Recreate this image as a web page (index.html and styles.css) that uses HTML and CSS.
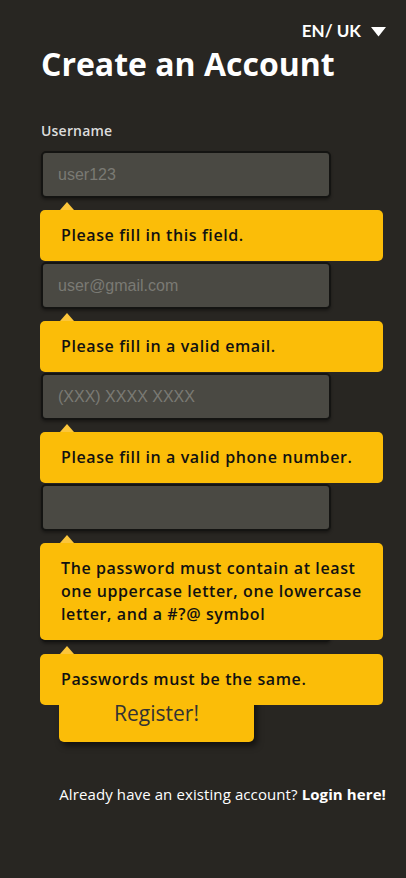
FILE: index.html
```html
<!DOCTYPE html>
<html lang="en">
<head>
<meta charset="utf-8">
<title>Create an Account</title>
<link rel="stylesheet" href="styles.css">
</head>
<body>
<div class="page">
  <header class="top">
    <button class="lang" type="button">EN/ UK
      <svg class="caret" width="15" height="10" viewBox="0 0 15 10"><path d="M0 0 H15 L7.5 9.5 Z" fill="#fff"/></svg>
    </button>
  </header>
  <h1 class="title">Create an Account</h1>
  <form class="form">
    <div class="field">
      <label class="label" for="username">Username</label>
      <input class="input" id="username" type="text" placeholder="user123">
      <div class="tip">Please fill in this field.</div>
    </div>
    <div class="field">
      <input class="input" type="text" aria-label="Email" placeholder="user@gmail.com">
      <div class="tip">Please fill in a valid email.</div>
    </div>
    <div class="field">
      <input class="input" type="text" aria-label="Phone number" placeholder="(XXX) XXXX XXXX">
      <div class="tip">Please fill in a valid phone number.</div>
    </div>
    <div class="field">
      <input class="input" type="password" aria-label="Password">
      <div class="tip">The password must contain at least one uppercase letter, one lowercase letter, and a #?@ symbol</div>
    </div>
    <div class="field">
      <input class="input" type="password" aria-label="Confirm password">
      <div class="tip">Passwords must be the same.</div>
    </div>
    <button class="register" type="button">Register!</button>
  </form>
  <p class="login">Already have an existing account? <b>Login here!</b></p>
</div>
</body>
</html>
```

FILE: styles.css
```css
* { box-sizing: border-box; }
html, body { margin: 0; padding: 0; }
body {
  background: #282622;
  font-family: "Open Sans", "Noto Sans", sans-serif;
  color: #fff;
  width: 406px;
  min-height: 878px;
}
.page {
  padding: 18px 20px 0 41px;
}
.top {
  display: flex;
  justify-content: flex-end;
}
.lang {
  background: none;
  border: 0;
  padding: 0;
  color: #fff;
  font-family: Lato, "Open Sans", sans-serif;
  font-weight: 700;
  font-size: 17px;
  line-height: 26px;
  display: flex;
  align-items: center;
  gap: 10px;
}
.caret { display: block; margin-top: 1px; }
.title {
  margin: 0;
  font-size: 32px;
  line-height: 40px;
  font-weight: 700;
  letter-spacing: 0;
}
.form {
  margin-top: 37px;
  display: flex;
  flex-direction: column;
  gap: 64px;
  width: 290px;
}
.field {
  position: relative;
  display: flex;
  flex-direction: column;
  gap: 10px;
}
.label {
  font-size: 14px;
  line-height: 20px;
  color: #dcdcdc;
  font-weight: 600;
  letter-spacing: 0.2px;
}
.input {
  height: 47px;
  width: 290px;
  border: 2px solid #141412;
  border-radius: 5px;
  background: #4a4943;
  box-shadow: 0 2px 3px rgba(0,0,0,0.35);
  padding: 0 15px;
  font-family: "Liberation Sans", Arial, sans-serif;
  font-size: 16px;
  color: #ddd;
}
.input::placeholder { color: #7a7a74; }
.tip {
  position: absolute;
  z-index: 2;
  top: calc(100% + 12px);
  left: -1px;
  width: 343px;
  background: #fbbd08;
  color: #111;
  border-radius: 5px;
  padding: 14px 20px 14px 21px;
  font-size: 16px;
  line-height: 23px;
  font-weight: 600;
  letter-spacing: 0.6px;
}
.tip::before {
  content: "";
  position: absolute;
  left: 20px;
  top: -8px;
  border-left: 7px solid transparent;
  border-right: 7px solid transparent;
  border-bottom: 8px solid #fcc63a;
}
.register {
  margin-top: -22px;
  margin-left: 18px;
  width: 195px;
  height: 58px;
  border: 0;
  border-radius: 5px;
  background: #fbbd08;
  color: #333;
  font-family: inherit;
  font-size: 21px;
  box-shadow: 3px 4px 6px rgba(0,0,0,0.55);
  padding: 0;
}
.login {
  margin: 42px 0 0 0;
  text-align: right;
  font-size: 15px;
  line-height: 20px;
  color: #fff;
  letter-spacing: 0.1px;
}
.login b { font-weight: 700; }
```
